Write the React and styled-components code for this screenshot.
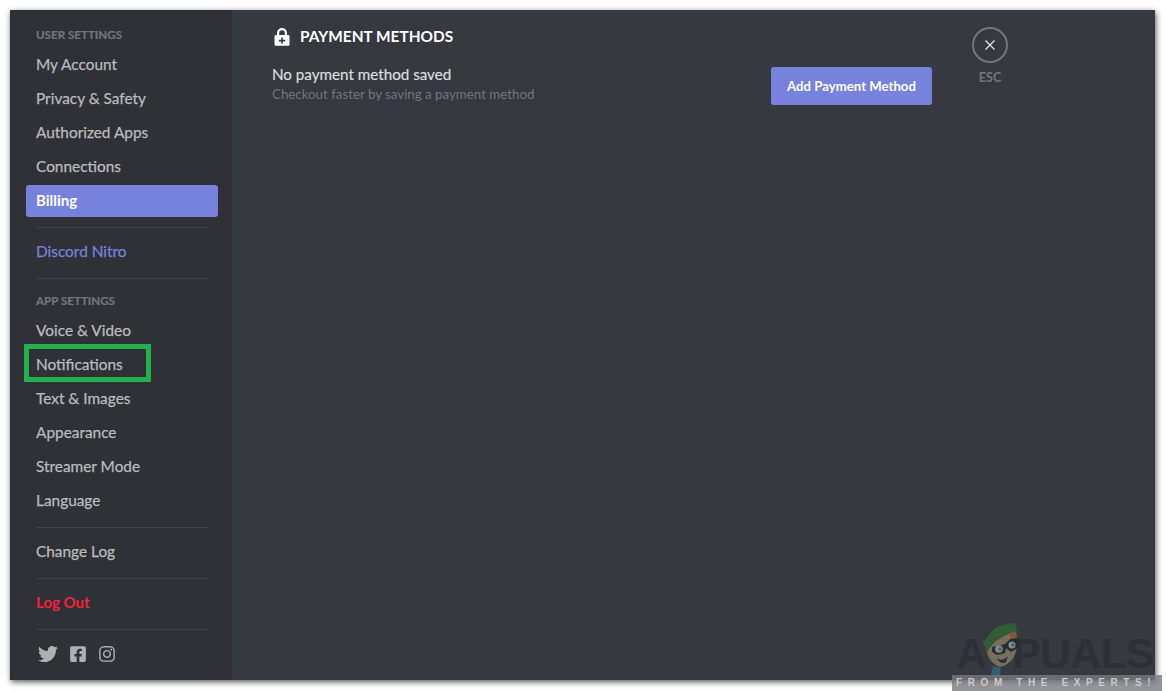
import React from "react";
import styled, { createGlobalStyle } from "styled-components";
import { FaTwitter, FaFacebookSquare, FaInstagram } from "react-icons/fa";

const GlobalStyle = createGlobalStyle`
  html, body {
    margin: 0;
    padding: 0;
    background: #fff;
    overflow: hidden;
  }
  * {
    box-sizing: border-box;
  }
`;

const Page = styled.div`
  position: relative;
  width: 1166px;
  height: 691px;
  padding: 10px 11px 11px 10px;
  overflow: hidden;
  font-family: Lato, "Noto Sans", sans-serif;
`;

const Window = styled.div`
  display: flex;
  width: 100%;
  height: 100%;
  background: #36393f;
  box-shadow: 1px 2px 6px rgba(0, 0, 0, 0.65);
`;

const Sidebar = styled.nav`
  display: flex;
  flex-direction: column;
  flex: none;
  width: 222px;
  padding: 11px 14px 0 16px;
  background: #2f3136;
`;

const SectionTitle = styled.div`
  height: 26px;
  margin-bottom: 2px;
  padding: 0 10px;
  line-height: 28px;
  font-size: 11.6px;
  font-weight: 700;
  color: #72767d;
  text-transform: uppercase;
  -webkit-text-stroke: 0.2px #72767d;
`;

const NavItem = styled.div`
  position: relative;
  height: 32px;
  margin-bottom: 2px;
  padding: 0 10px;
  border-radius: 3px;
  line-height: 30px;
  font-size: ${(p) => (p.$active || p.$danger ? "15px" : "15.4px")};
  font-weight: ${(p) => (p.$active || p.$danger ? 700 : 400)};
  color: ${(p) =>
    p.$active ? "#fff" : p.$danger ? "#f5213c" : p.$brand ? "#7782dc" : "#b9bbbe"};
  background: ${(p) => (p.$active ? "#7782dc" : "transparent")};
  -webkit-text-stroke: ${(p) => (p.$active || p.$danger ? "0" : "0.25px")};
`;

const Highlight = styled.span`
  position: absolute;
  top: -5px;
  left: -2px;
  width: 127px;
  height: 38px;
  border: 5px solid #22b14c;
`;

const Divider = styled.div`
  height: 1px;
  margin: 8px 10px;
  background: #414347;
`;

const Socials = styled.div`
  display: flex;
  align-items: center;
  gap: 11px;
  margin-top: 6px;
  padding: 0 12px;
  color: #b0b0b0;
`;

const Main = styled.main`
  display: flex;
  flex: 1;
  padding: 0 0 0 40px;
`;

const Content = styled.section`
  width: 660px;
  padding-top: 18px;
`;

const Heading = styled.h2`
  display: flex;
  align-items: center;
  gap: 10px;
  height: 17px;
  margin: 0 0 18px;
  padding-left: 2px;
  line-height: 17px;
  font-size: 15.4px;
  font-weight: 700;
  color: #fff;
  text-transform: uppercase;
`;

const MethodRow = styled.div`
  display: flex;
  justify-content: space-between;
  align-items: flex-start;
`;

const MethodText = styled.div`
  padding-top: 1px;
`;

const MethodTitle = styled.div`
  height: 20px;
  line-height: 20px;
  font-size: 15.2px;
  color: #dcddde;
  -webkit-text-stroke: 0.2px #dcddde;
`;

const MethodHint = styled.div`
  height: 20px;
  line-height: 20px;
  font-size: 13.3px;
  color: #72767d;
`;

const PrimaryButton = styled.button`
  width: 161px;
  height: 38px;
  margin-top: 4px;
  padding: 0 0 1px;
  border: 0;
  border-radius: 3px;
  background: #7782dc;
  font-family: inherit;
  font-size: 13.2px;
  font-weight: 700;
  color: #fff;
`;

const Tools = styled.div`
  display: flex;
  flex-direction: column;
  align-items: center;
  width: 36px;
  margin-left: 40px;
  padding-top: 17px;
`;

const CloseCircle = styled.div`
  display: flex;
  align-items: center;
  justify-content: center;
  width: 36px;
  height: 36px;
  border: 2px solid #72767d;
  border-radius: 50%;
  color: #dcddde;
`;

const EscLabel = styled.div`
  margin-top: 7px;
  font-size: 12.5px;
  font-weight: 700;
  line-height: 16px;
  color: #72767d;
`;

const Watermark = styled.div`
  position: absolute;
  right: 4px;
  bottom: 0;
  width: 210px;
  height: 66px;
`;

const WatermarkName = styled.div`
  position: absolute;
  left: 60px;
  top: 6px;
  font-family: "Liberation Sans", sans-serif;
  font-size: 43px;
  line-height: 44px;
  font-weight: 700;
  letter-spacing: -0.8px;
  color: #2d3035;
`;

const WatermarkA = styled(WatermarkName)`
  left: 4px;
`;

const WatermarkHead = styled.svg`
  position: absolute;
  left: 28px;
  top: -3px;
  opacity: 0.75;
`;

const WatermarkBar = styled.div`
  position: absolute;
  left: 0;
  right: 0;
  bottom: 0;
  height: 16px;
  padding-left: 4px;
  background: rgba(120, 122, 126, 0.8);
  line-height: 16px;
  font-family: "Liberation Sans", sans-serif;
  font-size: 10px;
  font-weight: 700;
  letter-spacing: 5.6px;
  white-space: nowrap;
  color: #c9cacc;
`;

const userItems = ["My Account", "Privacy & Safety", "Authorized Apps", "Connections"];
const appItems = ["Voice & Video", "Notifications", "Text & Images", "Appearance", "Streamer Mode", "Language"];

function LockIcon() {
  return (
    <svg width="16" height="18" viewBox="0 0 16 18">
      <path
        d="M3 7V5a5 5 0 0 1 10 0v2h1.200c.7 0 1.300.6 1.300 1.300v8.200c0 .7-.6 1.300-1.300 1.300H1.800c-.7 0-1.300-.6-1.300-1.300V8.300c0-.7.6-1.300 1.300-1.300H3zm2.200 0h5.600V5a2.800 2.800 0 0 0-5.600 0v2z"
        fill="#fff"
        fillRule="evenodd"
      />
      <path d="M7.200 9.500h1.600v2.300h2.300v1.600H8.800v2.300H7.200v-2.300H4.900v-1.600h2.300z" fill="#36393f" />
    </svg>
  );
}

function CloseIcon() {
  return (
    <svg width="12" height="12" viewBox="0 0 12 12">
      <path d="M1.500 1.500l9 9M10.500 1.500l-9 9" stroke="currentColor" strokeWidth="1.400" fill="none" />
    </svg>
  );
}

function App() {
  return (
    <Page>
      <GlobalStyle />
      <Window>
        <Sidebar>
          <SectionTitle>User Settings</SectionTitle>
          {userItems.map((item) => (
            <NavItem key={item}>{item}</NavItem>
          ))}
          <NavItem $active>Billing</NavItem>
          <Divider />
          <NavItem $brand>Discord Nitro</NavItem>
          <Divider />
          <SectionTitle>App Settings</SectionTitle>
          {appItems.map((item) => (
            <NavItem key={item}>
              {item}
              {item === "Notifications" && <Highlight />}
            </NavItem>
          ))}
          <Divider />
          <NavItem>Change Log</NavItem>
          <Divider />
          <NavItem $danger>Log Out</NavItem>
          <Divider />
          <Socials>
            <FaTwitter size={20} />
            <FaFacebookSquare size={18} />
            <FaInstagram size={18} />
          </Socials>
        </Sidebar>
        <Main>
          <Content>
            <Heading>
              <LockIcon />
              Payment Methods
            </Heading>
            <MethodRow>
              <MethodText>
                <MethodTitle>No payment method saved</MethodTitle>
                <MethodHint>Checkout faster by saving a payment method</MethodHint>
              </MethodText>
              <PrimaryButton>Add Payment Method</PrimaryButton>
            </MethodRow>
          </Content>
          <Tools>
            <CloseCircle>
              <CloseIcon />
            </CloseCircle>
            <EscLabel>ESC</EscLabel>
          </Tools>
        </Main>
      </Window>
      <Watermark>
        <WatermarkA>A</WatermarkA>
        <WatermarkName>PUALS</WatermarkName>
        <WatermarkHead width="40" height="54" viewBox="0 0 40 54">
          <path d="M7 30 C10 24 20 12 36 10 L37 24 C36 36 28 44 20 45 C13 42 8 37 7 30z" fill="#8f8062" />
          <path d="M28 11 L36 9 L37 20 L32 17z" fill="#9a6438" />
          <path d="M3 20 L15 6 C22 3 29 1 35 1 L37 10 C30 10 20 14 13 21 L7 30z" fill="#2f6b35" />
          <path d="M12 25 L25 22 L30 17 L38 16 L38 26 L31 30 L26 26 L25 31 L17 33 L12 30z" fill="#26292e" />
          <circle cx="19" cy="27" r="3.800" fill="#a3a5a8" />
          <circle cx="32" cy="23" r="3.600" fill="#a3a5a8" />
          <circle cx="20" cy="27" r="1.800" fill="#2b7f8c" />
          <circle cx="33" cy="23" r="1.700" fill="#2b7f8c" />
          <path d="M17 36 C20 39 25 38 28 34 L26 40 C23 42 19 41 17 36z" fill="#26292e" />
          <path d="M13 44 L21 46 L20 53 L11 53z" fill="#2b6f80" />
        </WatermarkHead>
        <WatermarkBar>FROM THE EXPERTS!</WatermarkBar>
      </Watermark>
    </Page>
  );
}

export default App;
